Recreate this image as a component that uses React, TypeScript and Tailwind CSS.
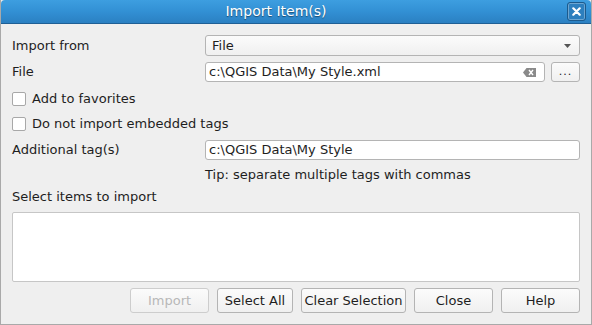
import React from 'react'

const font = { fontFamily: '"DejaVu Sans", "Liberation Sans", sans-serif' }

function Btn({ children, disabled = false, w }: { children: React.ReactNode; disabled?: boolean; w: string }) {
  return (
    <button
      disabled={disabled}
      className={`${w} h-[25px] rounded-[3px] border bg-gradient-to-b from-[#fbfbfb] to-[#f0f0f0] text-[13px] ${disabled ? 'text-[#b8b8b8] border-[#cdcdcd]' : 'text-[#1e1e1e] border-[#b4b4b4]'}`}
    >
      {children}
    </button>
  )
}

function Check({ label }: { label: string }) {
  return (
    <div className="flex items-center h-[25px] gap-[6px]">
      <span className="w-[14px] h-[14px] bg-white border border-[#a8a8a8] rounded-[2px]" />
      <span>{label}</span>
    </div>
  )
}

export default function App() {
  return (
    <div style={font} className="w-[592px] h-[325px] bg-[#efefef] text-[13px] text-[#1e1e1e] flex flex-col border-x border-b border-[#a9a9a9] overflow-hidden">
      {/* title bar */}
      <div className="relative h-[24px] shrink-0 bg-gradient-to-b from-[#3d9ee0] via-[#3290d4] to-[#2b80c2] border-b border-[#1f5f95] rounded-t-[4px] flex items-center justify-center">
        <span className="text-white text-[14px] [text-shadow:0_1px_1px_rgba(0,0,0,0.45)] pr-[40px]">Import Item(s)</span>
        <div className="absolute right-[5px] top-[2px] w-[19px] h-[19px] rounded-[3px] border border-[#1c5a8c] bg-[#2d7fbe] shadow-[inset_0_0_0_1px_rgba(255,255,255,0.3)] flex items-center justify-center">
          <svg width="9" height="9" viewBox="0 0 9 9">
            <path d="M1.3 1.3 L7.7 7.7 M7.7 1.3 L1.3 7.7" stroke="white" strokeWidth="2.2" strokeLinecap="round" />
          </svg>
        </div>
      </div>

      <div className="flex flex-col px-[11px] pt-[11px]">
        {/* import from */}
        <div className="flex items-center h-[21px]">
          <span className="w-[193px]">Import from</span>
          <div className="flex-1 h-[21px] rounded-[3px] border border-[#b4b4b4] bg-gradient-to-b from-[#fbfbfb] to-[#f0f0f0] flex items-center pl-[6px] pr-[8px] justify-between">
            <span>File</span>
            <svg width="7" height="4" viewBox="0 0 7 4">
              <path d="M0 0 H7 L3.5 4 Z" fill="#555" />
            </svg>
          </div>
        </div>

        {/* file */}
        <div className="flex items-center h-[20px] mt-[6px]">
          <span className="w-[193px]">File</span>
          <div className="flex-1 h-[20px] rounded-[3px] border border-[#b4b4b4] bg-white flex items-center pl-[3px] pr-[8px] justify-between">
            <span>c:\QGIS Data\My Style.xml</span>
            <svg width="13" height="9" viewBox="0 0 13 9">
              <path d="M3.5 0 H13 V9 H3.5 L0 4.5 Z" fill="#8a8a8a" />
              <path d="M6 2 L10 7 M10 2 L6 7" stroke="white" strokeWidth="1.4" />
            </svg>
          </div>
          <div className="w-[29px] h-[20px] ml-[6px] rounded-[3px] border border-[#b4b4b4] bg-gradient-to-b from-[#fbfbfb] to-[#f0f0f0] flex items-end justify-center pb-[4px]">
            <span className="text-[11px] leading-none tracking-[1px]">...</span>
          </div>
        </div>

        {/* checkboxes */}
        <div className="mt-[4px]">
          <Check label="Add to favorites" />
          <Check label="Do not import embedded tags" />
        </div>

        {/* additional tags */}
        <div className="flex items-center h-[20px] mt-[4px]">
          <span className="w-[193px]">Additional tag(s)</span>
          <div className="flex-1 h-[20px] rounded-[3px] border border-[#b4b4b4] bg-white flex items-center pl-[3px]">
            <span>c:\QGIS Data\My Style</span>
          </div>
        </div>

        <div className="pl-[193px] h-[17px] mt-[6px] flex items-center">Tip: separate multiple tags with commas</div>

        <div className="h-[17px] mt-[5px] flex items-center">Select items to import</div>

        {/* list */}
        <div className="mt-[7px] h-[70px] bg-white border border-[#c6c6c6] rounded-[2px]" />

        {/* buttons */}
        <div className="flex justify-end gap-[8px] mt-[6px]">
          <Btn w="w-[79px]" disabled>Import</Btn>
          <Btn w="w-[76px]">Select All</Btn>
          <Btn w="w-[105px]">Clear Selection</Btn>
          <Btn w="w-[79px]">Close</Btn>
          <Btn w="w-[79px]">Help</Btn>
        </div>
      </div>
    </div>
  )
}
